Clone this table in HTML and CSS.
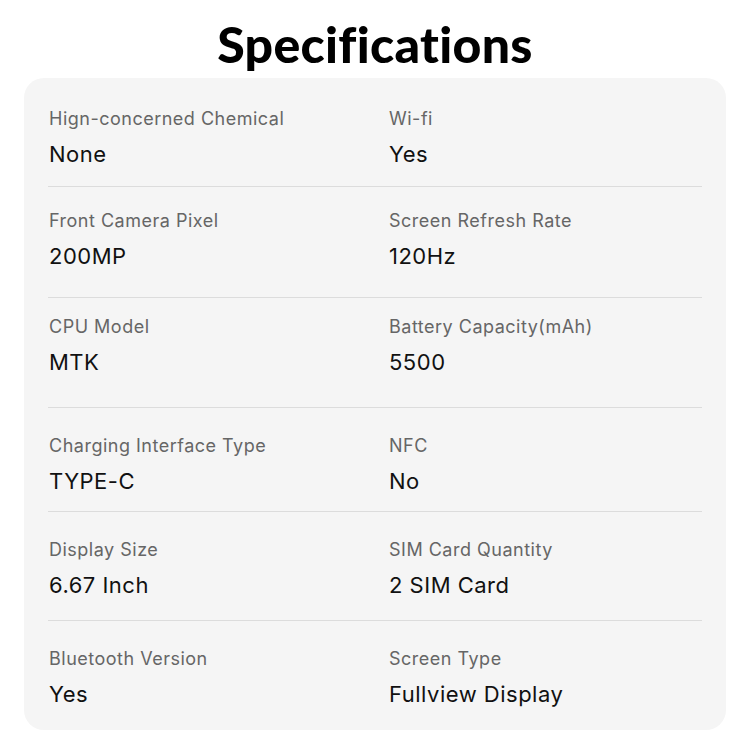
FILE: index.html
```html
<!DOCTYPE html>
<html lang="en">
<head>
<meta charset="utf-8">
<title>Specifications</title>
<link rel="stylesheet" href="styles.css">
</head>
<body>
<h1 class="title">Specifications</h1>
<section class="card">
  <div class="row r1">
    <div class="cell"><div class="label">Hign-concerned Chemical</div><div class="value">None</div></div>
    <div class="cell"><div class="label">Wi-fi</div><div class="value">Yes</div></div>
  </div>
  <div class="row r2">
    <div class="cell"><div class="label">Front Camera Pixel</div><div class="value">200MP</div></div>
    <div class="cell"><div class="label">Screen Refresh Rate</div><div class="value">120Hz</div></div>
  </div>
  <div class="row r3">
    <div class="cell"><div class="label">CPU Model</div><div class="value">MTK</div></div>
    <div class="cell"><div class="label">Battery Capacity(mAh)</div><div class="value">5500</div></div>
  </div>
  <div class="row r4">
    <div class="cell"><div class="label">Charging Interface Type</div><div class="value">TYPE-C</div></div>
    <div class="cell"><div class="label">NFC</div><div class="value">No</div></div>
  </div>
  <div class="row r5">
    <div class="cell"><div class="label">Display Size</div><div class="value">6.67 Inch</div></div>
    <div class="cell"><div class="label">SIM Card Quantity</div><div class="value">2 SIM Card</div></div>
  </div>
  <div class="row r6">
    <div class="cell"><div class="label">Bluetooth Version</div><div class="value">Yes</div></div>
    <div class="cell"><div class="label">Screen Type</div><div class="value">Fullview Display</div></div>
  </div>
</section>
</body>
</html>
```
FILE: styles.css
```css
* { box-sizing: border-box; }
html, body { margin: 0; padding: 0; background: #ffffff; }
body { width: 750px; height: 750px; font-family: Inter, "Noto Sans", sans-serif; }
.title {
  margin: 14px 0 4px;
  font-family: Lato, sans-serif;
  font-weight: 900;
  font-size: 50px;
  line-height: 60px;
  letter-spacing: 0.3px;
  text-align: center;
  color: #000;
}
.card {
  margin: 0 24px;
  height: 652px;
  background: #f5f5f5;
  border-radius: 20px;
  padding: 0 24px;
}
.row {
  display: grid;
  grid-template-columns: 340px 1fr;
  border-bottom: 1px solid #dcdcdc;
}
.row.r6 { border-bottom: none; }
.r1 { padding: 31px 0 19px; }
.r2 { padding: 24px 0 28px; }
.r3 { padding: 19px 0 32px; }
.r4 { padding: 28px 0 17px; }
.r5 { padding: 28px 0 22px; }
.r6 { padding: 28px 0 24px; }
.cell { display: flex; flex-direction: column; gap: 12px; padding-left: 1px; }
.label { font-size: 18px; line-height: 20px; letter-spacing: 0.5px; color: #666666; }
.value { font-size: 22px; line-height: 26px; letter-spacing: 0.5px; color: #111111; }
```
